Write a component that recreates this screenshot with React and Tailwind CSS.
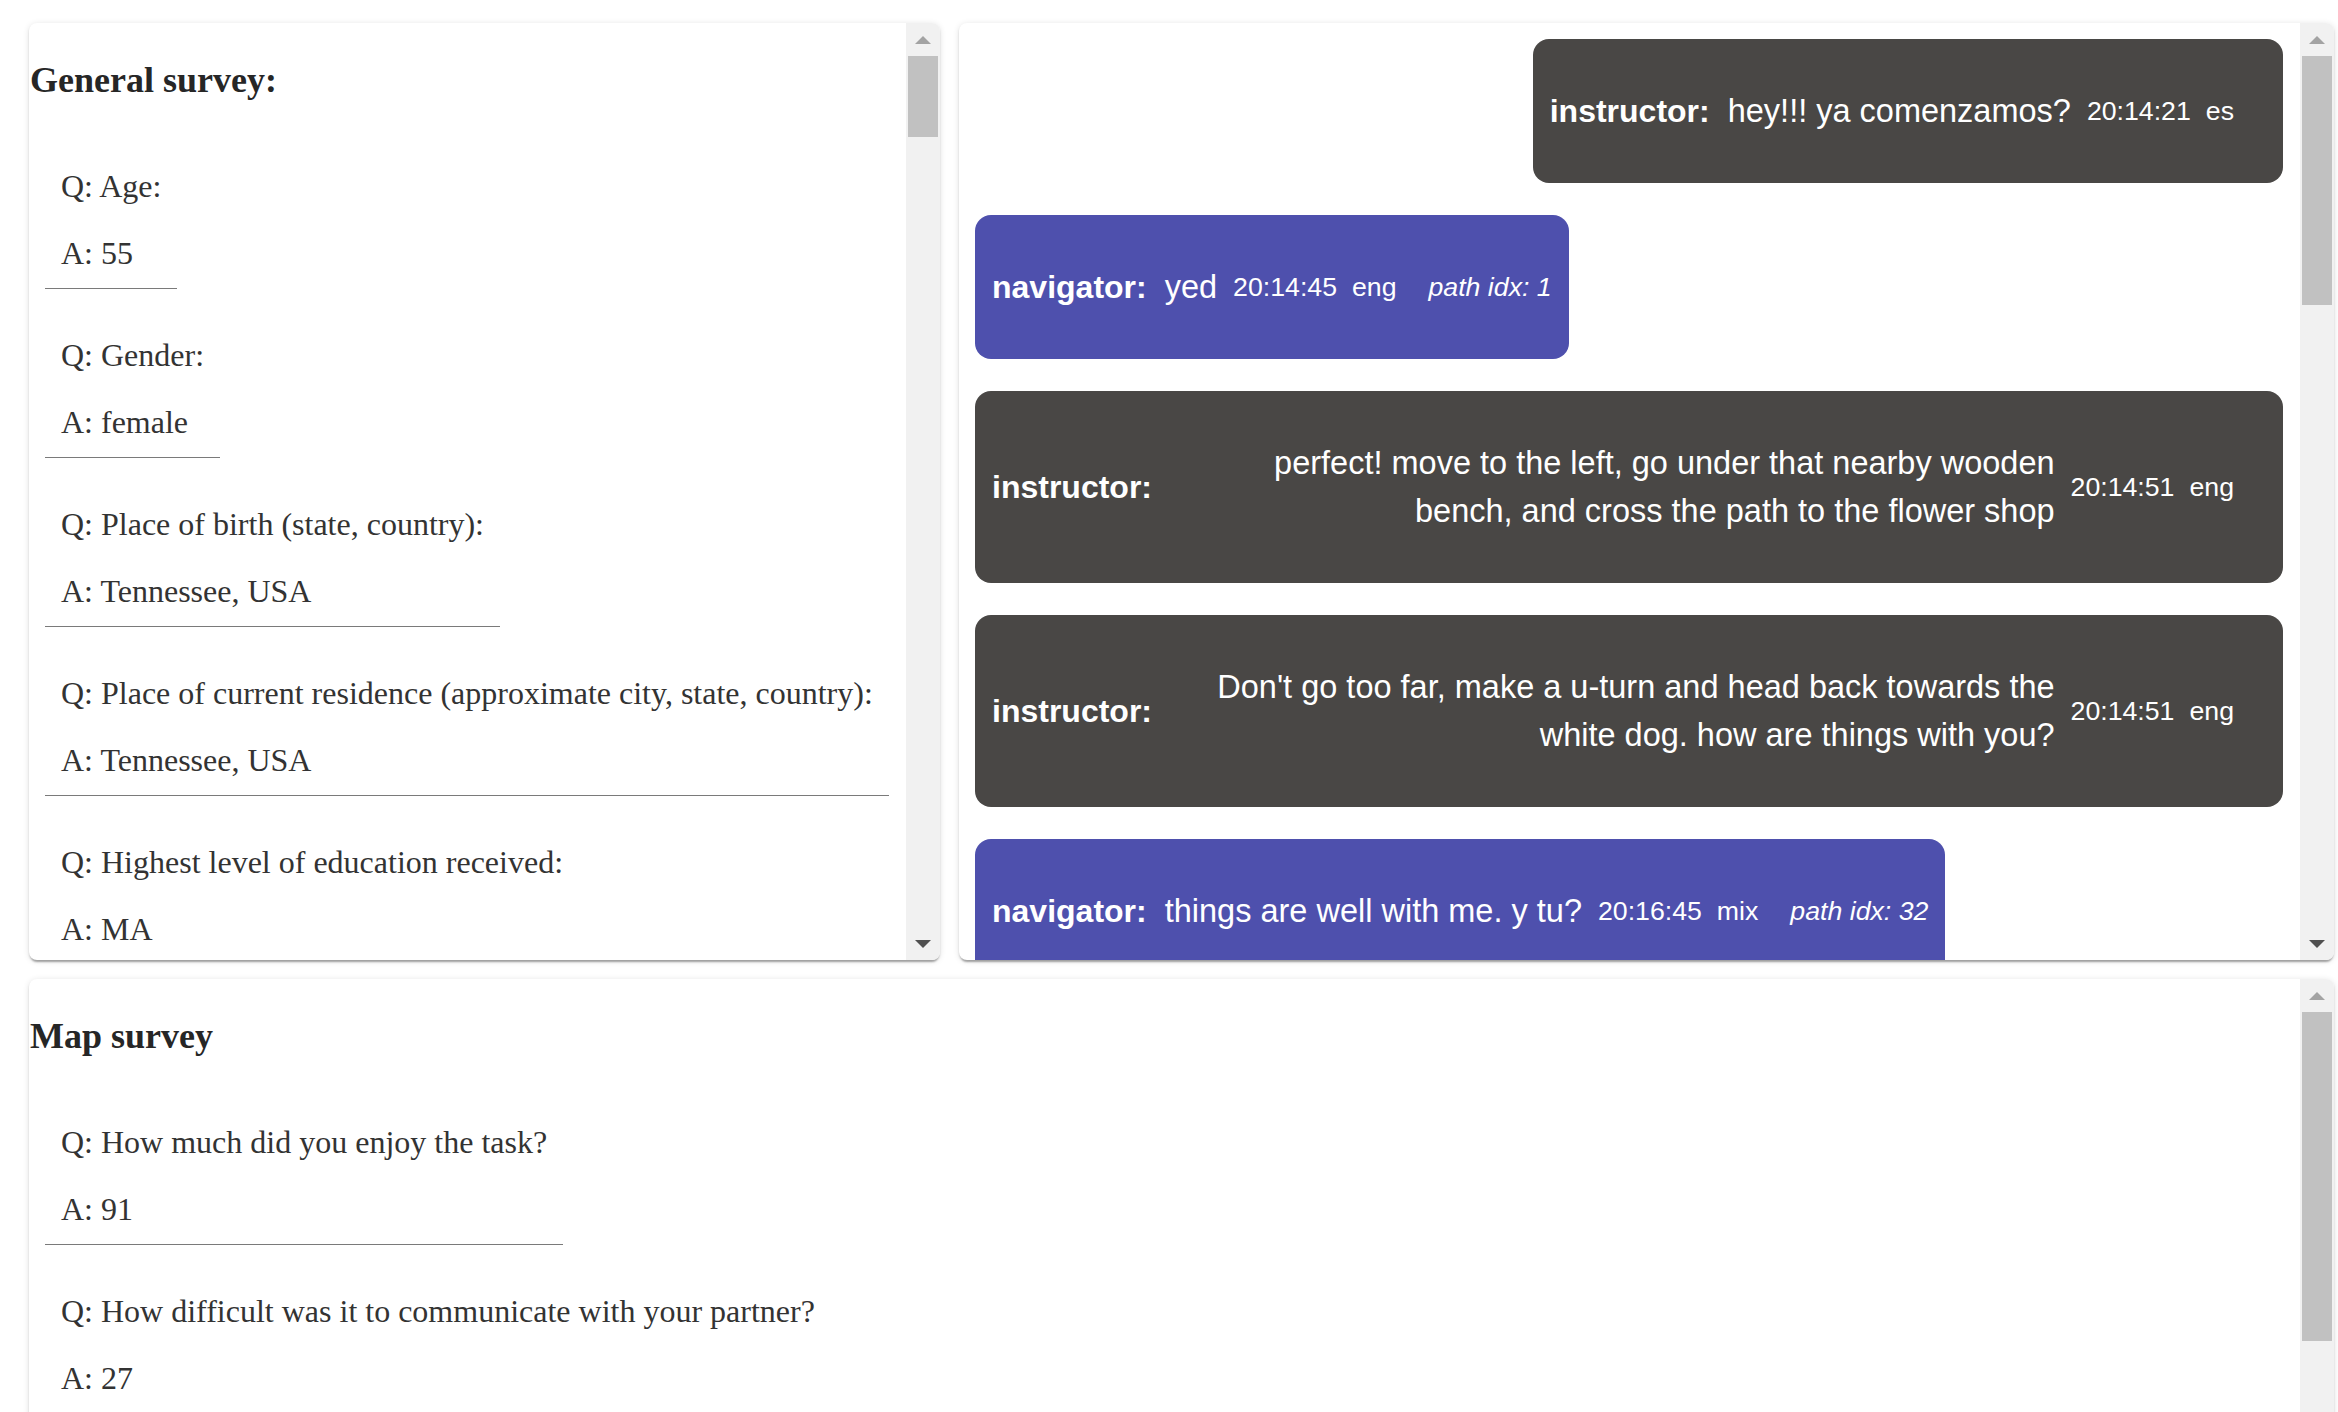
import React from "react";

function Tri({ up, color }) {
  return (
    <svg width="16" height="8" viewBox="0 0 16 8">
      <polygon points={up ? "8,0 16,8 0,8" : "0,0 16,0 8,8"} fill={color} />
    </svg>
  );
}

function Scrollbar({ thumbClass }) {
  return (
    <div className="flex w-[34px] shrink-0 flex-col bg-[#f1f1f1]">
      <div className="flex h-[33px] shrink-0 items-center justify-center">
        <Tri up color="#a3a3a3" />
      </div>
      <div className={`mx-[2px] shrink-0 bg-[#c1c1c1] ${thumbClass}`} />
      <div className="flex-1" />
      <div className="flex h-[33px] shrink-0 items-center justify-center">
        <Tri color="#505050" />
      </div>
    </div>
  );
}

function QA({ q, a }) {
  return (
    <div className="ml-[16px] w-fit border-b border-[#7a7a7a] px-[16px] pb-[16px]">
      <p className="leading-[37px]">Q: {q}</p>
      <p className="mt-[30px] leading-[37px]">A: {a}</p>
    </div>
  );
}

function Survey({ title, items }) {
  return (
    <div className="min-w-0 flex-1 overflow-hidden font-['Liberation_Serif','Times_New_Roman',serif] text-[32px] text-[#333]">
      <h2 className="mt-[37px] pl-[1px] text-[36px] font-bold leading-[41px] text-[#262626]">{title}</h2>
      <div className="mt-[67px] flex flex-col gap-[48px]">
        {items.map((it, i) => (
          <QA key={i} q={it[0]} a={it[1]} />
        ))}
      </div>
    </div>
  );
}

function Bubble({ role, msg, time, lang, path, right, full }) {
  const nav = role === "navigator";
  return (
    <div
      className={`flex max-w-full items-center rounded-[16px] px-[17px] py-[48px] text-white ${
        nav ? "bg-[#4e50ad]" : "bg-[#494745]"
      } ${full ? "self-stretch" : right ? "self-end" : "self-start"}`}
    >
      <span className="mr-[18px] shrink-0 text-[32px] font-bold leading-[48px]">{role}:</span>
      <span className="ml-auto max-w-[860px] text-right text-[32.5px] leading-[48px]">{msg}</span>
      <span className="ml-[16px] shrink-0 text-[26.7px]">{time}</span>
      <span className="ml-[15px] shrink-0 text-[26.7px]">{lang}</span>
      <span className="ml-[32px] shrink-0 text-[26.7px] italic">{path}</span>
    </div>
  );
}

const shadow =
  "shadow-[0_4px_2px_-2px_rgba(0,0,0,0.22),0_2px_2px_0_rgba(0,0,0,0.14),0_1px_6px_0_rgba(0,0,0,0.12)]";

export default function App() {
  return (
    <div className="h-screen overflow-hidden bg-white pl-[29px] pr-[4px] pt-[23px]">
      <div className="flex h-[937px] gap-[19px]">
        <div className={`flex w-[911px] shrink-0 overflow-hidden rounded-lg bg-white ${shadow}`}>
          <Survey
            title="General survey:"
            items={[
              ["Age:", "55"],
              ["Gender:", "female"],
              ["Place of birth (state, country):", "Tennessee, USA"],
              ["Place of current residence (approximate city, state, country):", "Tennessee, USA"],
              ["Highest level of education received:", "MA"],
            ]}
          />
          <Scrollbar thumbClass="h-[81px]" />
        </div>
        <div className={`flex min-w-0 flex-1 overflow-hidden rounded-lg bg-white ${shadow}`}>
          <div className="flex min-w-0 flex-1 flex-col gap-[32px] overflow-hidden pb-[16px] pl-[16px] pr-[17px] pt-[16px] font-['Liberation_Sans',Arial,sans-serif]">
            <Bubble role="instructor" msg="hey!!! ya comenzamos?" time="20:14:21" lang="es" path="" right />
            <Bubble role="navigator" msg="yed" time="20:14:45" lang="eng" path="path idx: 1" />
            <Bubble
              role="instructor"
              msg="perfect! move to the left, go under that nearby wooden bench, and cross the path to the flower shop"
              time="20:14:51"
              lang="eng"
              path=""
              full
            />
            <Bubble
              role="instructor"
              msg="Don't go too far, make a u-turn and head back towards the white dog. how are things with you?"
              time="20:14:51"
              lang="eng"
              path=""
              full
            />
            <Bubble
              role="navigator"
              msg="things are well with me. y tu?"
              time="20:16:45"
              lang="mix"
              path="path idx: 32"
            />
            <Bubble role="instructor" msg="bien, gracias" time="20:16:58" lang="es" path="" right />
          </div>
          <Scrollbar thumbClass="h-[249px]" />
        </div>
      </div>
      <div className={`mt-[19px] flex h-[937px] overflow-hidden rounded-lg bg-white ${shadow}`}>
        <Survey
          title="Map survey"
          items={[
            ["How much did you enjoy the task?", "91"],
            ["How difficult was it to communicate with your partner?", "27"],
            ["How confident are you that you reached the goal?", "80"],
          ]}
        />
        <Scrollbar thumbClass="h-[329px]" />
      </div>
    </div>
  );
}
